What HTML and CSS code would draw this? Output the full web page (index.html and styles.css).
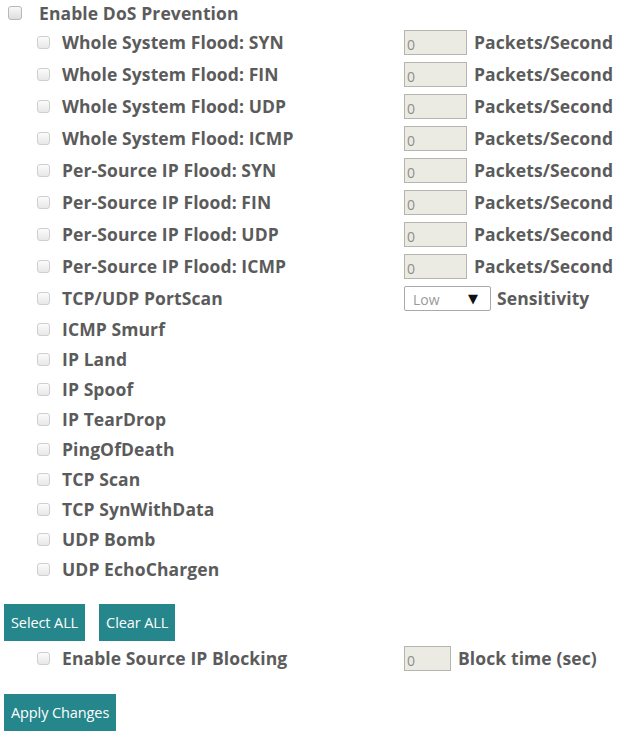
FILE: index.html
```html
<!DOCTYPE html>
<html>
<head>
<meta charset="utf-8">
<link rel="stylesheet" href="styles.css">
</head>
<body>
<form class="dos">
  <div class="main-row">
    <span class="cb cb-main"></span>
    <span class="lbl">Enable DoS Prevention</span>
  </div>

  <div class="row tall"><div class="opt"><span class="cb"></span><span class="lbl">Whole System Flood: SYN</span></div><div class="val"><span class="num">0</span><span class="lbl">Packets/Second</span></div></div>
  <div class="row tall"><div class="opt"><span class="cb"></span><span class="lbl">Whole System Flood: FIN</span></div><div class="val"><span class="num">0</span><span class="lbl">Packets/Second</span></div></div>
  <div class="row tall"><div class="opt"><span class="cb"></span><span class="lbl">Whole System Flood: UDP</span></div><div class="val"><span class="num">0</span><span class="lbl">Packets/Second</span></div></div>
  <div class="row tall"><div class="opt"><span class="cb"></span><span class="lbl">Whole System Flood: ICMP</span></div><div class="val"><span class="num">0</span><span class="lbl">Packets/Second</span></div></div>
  <div class="row tall"><div class="opt"><span class="cb"></span><span class="lbl">Per-Source IP Flood: SYN</span></div><div class="val"><span class="num">0</span><span class="lbl">Packets/Second</span></div></div>
  <div class="row tall"><div class="opt"><span class="cb"></span><span class="lbl">Per-Source IP Flood: FIN</span></div><div class="val"><span class="num">0</span><span class="lbl">Packets/Second</span></div></div>
  <div class="row tall"><div class="opt"><span class="cb"></span><span class="lbl">Per-Source IP Flood: UDP</span></div><div class="val"><span class="num">0</span><span class="lbl">Packets/Second</span></div></div>
  <div class="row tall"><div class="opt"><span class="cb"></span><span class="lbl">Per-Source IP Flood: ICMP</span></div><div class="val"><span class="num">0</span><span class="lbl">Packets/Second</span></div></div>
  <div class="row tall"><div class="opt"><span class="cb"></span><span class="lbl">TCP/UDP PortScan</span></div><div class="val"><span class="sel"><span class="sel-text">Low</span><span class="sel-arrow">▼</span></span><span class="lbl">Sensitivity</span></div></div>
  <div class="row"><div class="opt"><span class="cb"></span><span class="lbl">ICMP Smurf</span></div></div>
  <div class="row"><div class="opt"><span class="cb"></span><span class="lbl">IP Land</span></div></div>
  <div class="row"><div class="opt"><span class="cb"></span><span class="lbl">IP Spoof</span></div></div>
  <div class="row"><div class="opt"><span class="cb"></span><span class="lbl">IP TearDrop</span></div></div>
  <div class="row"><div class="opt"><span class="cb"></span><span class="lbl">PingOfDeath</span></div></div>
  <div class="row"><div class="opt"><span class="cb"></span><span class="lbl">TCP Scan</span></div></div>
  <div class="row"><div class="opt"><span class="cb"></span><span class="lbl">TCP SynWithData</span></div></div>
  <div class="row"><div class="opt"><span class="cb"></span><span class="lbl">UDP Bomb</span></div></div>
  <div class="row"><div class="opt"><span class="cb"></span><span class="lbl">UDP EchoChargen</span></div></div>

  <div class="btns">
    <button type="button" class="btn">Select ALL</button>
    <button type="button" class="btn">Clear ALL</button>
  </div>

  <div class="row tall"><div class="opt"><span class="cb"></span><span class="lbl">Enable Source IP Blocking</span></div><div class="val"><span class="num short">0</span><span class="lbl">Block time (sec)</span></div></div>

  <div class="btns apply">
    <button type="button" class="btn">Apply Changes</button>
  </div>
</form>
</body>
</html>
```
FILE: styles.css
```css
html, body {
  margin: 0;
  padding: 0;
  background: #ffffff;
}

body {
  font-family: "Open Sans", "DejaVu Sans", sans-serif;
  color: #5b5b5b;
}

.dos {
  display: flex;
  flex-direction: column;
}

.lbl {
  font-weight: 700;
  font-size: 17.5px;
  letter-spacing: 0.1px;
  color: #5b5b5b;
  white-space: nowrap;
}

.main-row {
  display: flex;
  align-items: center;
  height: 26px;
  padding-left: 8px;
  gap: 17px;
}

.cb {
  display: inline-block;
  box-sizing: border-box;
  width: 13px;
  height: 13px;
  border: 1px solid #cfcfcf;
  border-radius: 3px;
  background: linear-gradient(#fbfbfb, #e8e8e8);
  flex: none;
}

.cb-main {
  width: 14px;
  height: 14px;
  border-color: #b8b8b8;
  background: linear-gradient(#f8f8f8, #dedede);
}

.row {
  display: grid;
  grid-template-columns: 404px auto;
  align-items: center;
  height: 30px;
}

.row.tall {
  height: 32px;
}

.opt {
  display: flex;
  align-items: center;
  padding-left: 37px;
  gap: 12px;
}

.val {
  display: flex;
  align-items: center;
  gap: 7px;
}

.num {
  box-sizing: border-box;
  width: 63px;
  height: 25px;
  border: 1px solid #b5b5b0;
  background: #ebebe4;
  color: #8e8e8e;
  font-size: 14px;
  line-height: 14px;
  padding: 7px 0 0 2px;
  font-family: "Open Sans", sans-serif;
  font-weight: 400;
}

.num.short {
  width: 47px;
}

.sel {
  box-sizing: border-box;
  width: 87px;
  height: 25px;
  border: 1px solid #a9a9a9;
  border-radius: 2px;
  background: #ffffff;
  display: flex;
  align-items: center;
  justify-content: space-between;
  padding: 0 12px 0 8px;
  margin-right: -1px;
}

.sel-text {
  font-size: 14px;
  color: #9a9a9a;
  font-weight: 400;
  padding-top: 2px;
}

.sel-arrow {
  font-size: 13px;
  color: #111;
  font-family: "DejaVu Sans", sans-serif;
}

.btns {
  display: flex;
  gap: 14px;
  padding-left: 4px;
  margin-top: 20px;
  margin-bottom: 1px;
}

.btns.apply {
  margin-top: 20px;
}

.btn {
  height: 37px;
  padding: 0 7px;
  border: none;
  border-radius: 0;
  background: #25868b;
  color: #ffffff;
  font-family: "Open Sans", sans-serif;
  font-size: 14.5px;
  font-weight: 400;
  letter-spacing: -0.1px;
  cursor: pointer;
}
```
